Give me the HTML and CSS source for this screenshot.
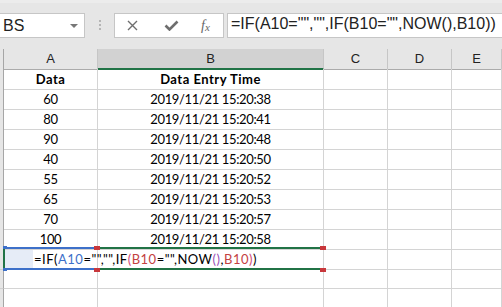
FILE: index.html
```html
<!DOCTYPE html>
<html lang="en">
<head>
<meta charset="UTF-8">
<title>Data Entry Time</title>
<link rel="stylesheet" href="styles.css">
</head>
<body>
<div class="formula-bar">
  <div class="name-box">
    <span class="name">BS</span>
    <span class="caret"></span>
  </div>
  <div class="grip"><i></i><i></i><i></i></div>
  <div class="fx-buttons">
    <svg class="ico-x" width="11" height="11" viewBox="0 0 11 11"><path d="M1 1L10 10M10 1L1 10" stroke="#6e6e6e" stroke-width="1.4" fill="none"/></svg>
    <svg class="ico-ok" width="15" height="11" viewBox="0 0 15 11"><path d="M1.5 5.5L5.5 9.5L13.5 1.5" stroke="#6e6e6e" stroke-width="2.6" fill="none"/></svg>
    <span class="fx">f<sub>x</sub></span>
  </div>
  <div class="formula-input">=IF(A10="","",IF(B10="",NOW(),B10))</div>
</div>

<div class="sheet">
  <div class="row head">
    <div class="rh"></div>
    <div class="ch">A</div>
    <div class="ch active">B</div>
    <div class="ch">C</div>
    <div class="ch">D</div>
    <div class="ch">E</div>
  </div>
  <div class="row">
    <div class="rh"></div>
    <div class="cell bold">Data</div>
    <div class="cell bold">Data Entry Time</div>
    <div class="cell"></div><div class="cell"></div><div class="cell"></div>
  </div>
  <div class="row">
    <div class="rh"></div>
    <div class="cell">60</div>
    <div class="cell">2019/11/21 15:20:38</div>
    <div class="cell"></div><div class="cell"></div><div class="cell"></div>
  </div>
  <div class="row">
    <div class="rh"></div>
    <div class="cell">80</div>
    <div class="cell">2019/11/21 15:20:41</div>
    <div class="cell"></div><div class="cell"></div><div class="cell"></div>
  </div>
  <div class="row">
    <div class="rh"></div>
    <div class="cell">90</div>
    <div class="cell">2019/11/21 15:20:48</div>
    <div class="cell"></div><div class="cell"></div><div class="cell"></div>
  </div>
  <div class="row">
    <div class="rh"></div>
    <div class="cell">40</div>
    <div class="cell">2019/11/21 15:20:50</div>
    <div class="cell"></div><div class="cell"></div><div class="cell"></div>
  </div>
  <div class="row">
    <div class="rh"></div>
    <div class="cell">55</div>
    <div class="cell">2019/11/21 15:20:52</div>
    <div class="cell"></div><div class="cell"></div><div class="cell"></div>
  </div>
  <div class="row">
    <div class="rh"></div>
    <div class="cell">65</div>
    <div class="cell">2019/11/21 15:20:53</div>
    <div class="cell"></div><div class="cell"></div><div class="cell"></div>
  </div>
  <div class="row">
    <div class="rh"></div>
    <div class="cell">70</div>
    <div class="cell">2019/11/21 15:20:57</div>
    <div class="cell"></div><div class="cell"></div><div class="cell"></div>
  </div>
  <div class="row">
    <div class="rh"></div>
    <div class="cell">100</div>
    <div class="cell">2019/11/21 15:20:58</div>
    <div class="cell"></div><div class="cell"></div><div class="cell"></div>
  </div>
  <div class="row editing">
    <div class="rh"></div>
    <div class="cell edit-cell">
      <span class="edit-fill"></span>
      <span class="edit-text">=IF(<span class="ref-a">A10</span>="","",IF<span class="par1">(</span><span class="ref-b">B10</span>="",NOW<span class="par2">()</span>,<span class="ref-b">B10</span><span class="par1">)</span>)</span><span class="cursor"></span>
    </div>
    <div class="cell"></div>
    <div class="cell"></div><div class="cell"></div><div class="cell"></div>
    <div class="sel-box"></div>
    <div class="ref-box"></div>
    <span class="cap cap-tl"></span>
    <span class="cap cap-bl"></span>
    <span class="knob knob-a-top"></span>
    <span class="knob knob-a-bot"></span>
    <span class="knob knob-b-top"></span>
    <span class="knob knob-b-bot"></span>
  </div>
  <div class="row">
    <div class="rh"></div>
    <div class="cell"></div><div class="cell"></div>
    <div class="cell"></div><div class="cell"></div><div class="cell"></div>
  </div>
  <div class="row">
    <div class="rh"></div>
    <div class="cell"></div><div class="cell"></div>
    <div class="cell"></div><div class="cell"></div><div class="cell"></div>
  </div>
</div>
</body>
</html>
```

FILE: styles.css
```css
body {
  margin: 0;
  padding: 0;
  width: 502px;
  height: 307px;
  overflow: hidden;
  background: #fff;
  font-family: "Liberation Sans", Arial, sans-serif;
}

/* formula bar */
.formula-bar {
  display: flex;
  align-items: flex-start;
  height: 49px;
  box-sizing: border-box;
  background: #e6e6e6;
  border-top: 3px solid #ececec;
  padding-top: 10px;
  overflow: hidden;
}
.name-box {
  display: flex;
  align-items: center;
  justify-content: space-between;
  flex: 0 0 86px;
  height: 25px;
  margin-left: -1px;
  box-sizing: border-box;
  background: #fff;
  border: 1px solid #c6c6c6;
  padding: 0 6px 0 3px;
}
.name {
  font-size: 16px;
  color: #222;
}
.caret {
  width: 0;
  height: 0;
  border-left: 4px solid transparent;
  border-right: 4px solid transparent;
  border-top: 4px solid #777;
}
.grip {
  flex: 0 0 29px;
  display: flex;
  flex-direction: column;
  align-items: center;
  gap: 2px;
  padding-top: 7px;
}
.grip i {
  display: block;
  width: 2px;
  height: 2px;
  background: #b5b5b5;
}
.fx-buttons {
  flex: 0 0 110px;
  height: 25px;
  box-sizing: border-box;
  display: flex;
  align-items: center;
  background: #fff;
  border: 1px solid #c6c6c6;
}
.ico-x {
  margin-left: 12px;
}
.ico-ok {
  margin-left: 26px;
}
.fx {
  margin-left: 22px;
  font-family: "Liberation Serif", "Times New Roman", serif;
  font-style: italic;
  font-size: 14px;
  color: #666;
}
.fx sub {
  font-size: 11px;
  vertical-align: baseline;
  position: relative;
  top: 1px;
}
.formula-input {
  flex: 1 0 auto;
  height: 25px;
  box-sizing: border-box;
  margin-left: 3px;
  padding: 1px 0 0 3px;
  background: #fff;
  border: 1px solid #c6c6c6;
  border-right: none;
  font-size: 16px;
  color: #222;
  white-space: nowrap;
}

/* grid */
.sheet {
  font-family: Lato, "Open Sans", sans-serif;
  font-size: 13px;
}
.row {
  display: grid;
  grid-template-columns: 4px 94px 226px 64px 64px 1fr;
  height: 20px;
}
.row > div {
  box-sizing: border-box;
  border-bottom: 1px solid #d4d4d4;
  border-right: 1px solid #d4d4d4;
}
.row > .rh {
  background: #e6e6e6;
  border-right: 1px solid #a6a6a6;
  border-bottom-color: #d0d0d0;
}
.head > div {
  border-bottom-color: #ababab;
  border-right-color: #c6c6c6;
}
.ch {
  background: #e6e6e6;
  font-family: "Liberation Sans", Arial, sans-serif;
  font-size: 13px;
  color: #222;
  text-align: center;
  line-height: 19px;
}
.head > .ch.active {
  background: #d2d2d2;
  border-bottom: 2px solid #217346;
}
.cell {
  text-align: center;
  line-height: 20px;
  letter-spacing: -0.35px;
  color: #000;
  white-space: nowrap;
}
.bold {
  font-weight: bold;
  letter-spacing: 0.5px;
}

/* row being edited */
.editing {
  position: relative;
}
.edit-cell {
  display: flex;
  align-items: center;
  text-align: left;
  overflow: visible;
}
.edit-fill {
  flex: 0 0 28px;
  height: 18px;
  margin-left: 1px;
  background: #e6ecf7;
}
.edit-text {
  margin-left: 1px;
  letter-spacing: 0.5px;
}
.ref-a {
  color: #3d70c9;
}
.ref-b {
  color: #c4413f;
}
.par1 {
  color: #cf4a78;
}
.par2 {
  color: #9a4fb7;
}
.cursor {
  display: inline-block;
  width: 1px;
  height: 16px;
  margin-left: 2px;
  background: #000;
}
.editing > .sel-box {
  position: absolute;
  left: 3px;
  top: -2px;
  width: 321px;
  height: 23px;
  border: 2px solid #217346;
  border-right: none;
  pointer-events: none;
}
.editing > .ref-box {
  position: absolute;
  left: 5px;
  top: -2px;
  width: 91px;
  height: 23px;
  border: 2px solid #3d70c9;
  border-left: none;
  border-right: none;
}
.cap {
  position: absolute;
  left: 3px;
  width: 4px;
  height: 3px;
  background: #3d70c9;
}
.cap-tl {
  top: -3px;
}
.cap-bl {
  top: 19px;
}
.knob {
  position: absolute;
  width: 6px;
  height: 4px;
  background: #c8373b;
}
.knob-a-top {
  left: 94px;
  top: -3px;
}
.knob-a-bot {
  left: 94px;
  top: 19px;
}
.knob-b-top {
  left: 320px;
  top: -3px;
}
.knob-b-bot {
  left: 320px;
  top: 19px;
}
```
